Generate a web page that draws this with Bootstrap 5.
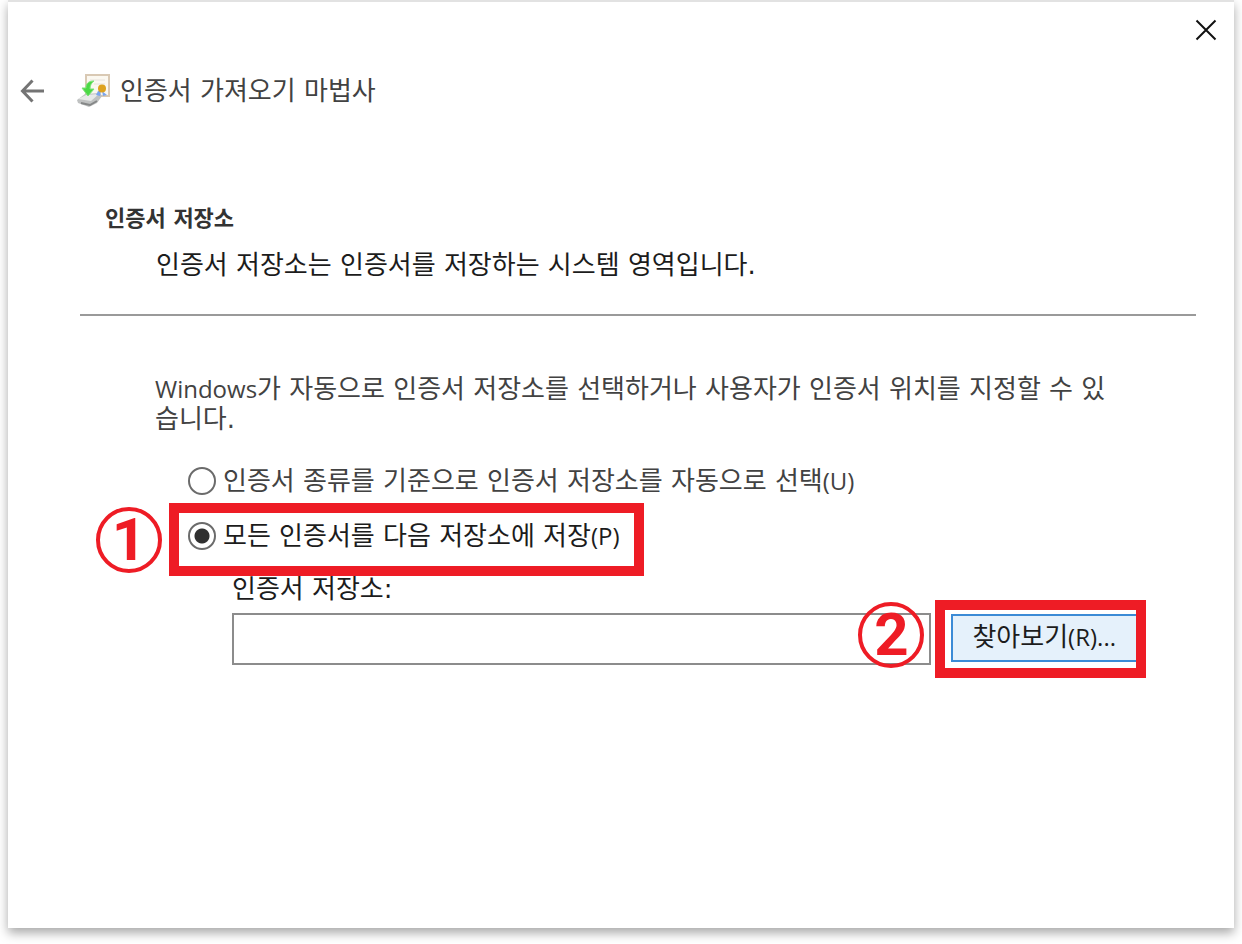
<!DOCTYPE html>
<html lang="ko">
<head>
<meta charset="utf-8">
<meta name="viewport" content="width=device-width, initial-scale=1">
<title>인증서 가져오기 마법사</title>
<link href="https://cdn.jsdelivr.net/npm/bootstrap@5.3.0/dist/css/bootstrap.min.css" rel="stylesheet">
<style>
  body { font-family: "DejaVu Sans", "Noto Sans CJK KR", sans-serif; font-size: 26px; line-height: 30px; color: #1c1c1c; background: #fff; }
  .page-frame { padding: 0 8px 16px; }
  .wizard { border-top: 2px solid #e2e2e2; background: #fff; box-shadow: 0 5px 10px rgba(0, 0, 0, .34); }
  .latin { font-family: "Open Sans", sans-serif; font-size: 24px; }
  .soft { color: #424242; }
  .title-bar { padding: 16px 16px 0; }
  .title-row { padding: 32px 12px 0; }
  .title-row h1 { font-size: 26px; line-height: 32px; margin-left: 10px; }
  .back-btn { margin-right: 32px; }
  .intro { padding: 96px 0 0 97px; }
  .intro h2 { font-size: 22px; line-height: 30px; color: #333; }
  .intro p { padding: 16px 0 0 51px; }
  .divider { margin: 34px 38px 0 72px; border-top: 2px solid #9a9a9a; opacity: 1; }
  .choices { padding: 58px 88px 0 147px; }
  .lead-text { padding-right: 24px; }
  .option { gap: 7px; }
  .option-auto { padding: 32px 0 0 33px; }
  .radio-dot { appearance: none; flex: none; width: 28px; height: 28px; margin: 0; border: 2px solid #6b6b6b; border-radius: 50%; background: #fff; }
  .radio-dot:checked { background: radial-gradient(circle, #303030 7px, #fff 8px); }
  .callout { border: 10px solid #ee1c25; }
  .callout-option { margin: 7px 0 0 14px; padding: 8px 14px 15px 9px; }
  .store { margin-top: -2px; padding-left: 77px; }
  .store-row { margin-top: -4px; gap: 4px; }
  .store-input { min-width: 0; height: 52px; border: 2px solid #8c8c8c; background: #fff; padding: 0 12px; }
  .callout-browse { padding: 4px 0 6px 6px; }
  .browse-btn { height: 48px; padding: 0 20px 2px 19px; border: 2px solid #3b8bd6; border-right: 0; background: #e5f1fb; color: #1c1c1c; white-space: nowrap; }
  .marker { width: 66px; height: 66px; border: 4px solid #ee1c25; border-radius: 50%; color: #ee1c25; font: bold 60px/60px Roboto, sans-serif; }
  .marker-one { left: -83px; top: -6px; }
  .marker-two { left: -87px; top: -8px; }
</style>
<script src="https://cdn.jsdelivr.net/npm/bootstrap@5.3.0/dist/js/bootstrap.bundle.min.js"></script>
</head>
<body>
<div class="page-frame d-flex flex-column min-vh-100">
  <main class="wizard flex-grow-1">
    <div class="title-bar d-flex justify-content-end">
      <button type="button" class="btn p-0 border-0 rounded-0 d-flex" aria-label="닫기">
        <svg width="24" height="24" viewBox="0 0 24 24" fill="none" stroke="#111" stroke-width="2"><path d="M2.500 2.500 21.500 21.500M21.500 2.500 2.500 21.500"/></svg>
      </button>
    </div>
    <header class="title-row d-flex align-items-center">
      <button type="button" class="back-btn btn p-0 border-0 rounded-0 d-flex" aria-label="뒤로">
        <svg width="25" height="24" viewBox="0 0 25 24" fill="none" stroke="#747474" stroke-width="3"><path d="M24 12H3M12.500 1.500 2.500 12l10 10.500"/></svg>
      </button>
      <svg width="33" height="34" viewBox="0 0 33 34" aria-hidden="true">
        <path d="M9 1h23v21H9z" fill="#fbf8f0" stroke="#d9c9b4" stroke-width="2"/>
        <path d="M13 6h15M17 10h11" stroke="#e6e2dc" stroke-width="1"/>
        <path d="M0 26 8 20l15-1 2 3-5 7-8 4L1 29z" fill="#bfc1c1"/>
        <path d="M1 25 9 21l13-1-8 7z" fill="#e7e9e8"/>
        <path d="M4 29l9 2 7-4" fill="none" stroke="#858787" stroke-width="2"/>
        <path d="M21 17h3l-1 5-4-1zM25 17l5 4-4 1z" fill="#7ba5ee"/>
        <circle cx="25" cy="14.500" r="4" fill="#dda21e"/>
        <path d="M17 7c-6 0-8 3-8 7H5l6 8 6-7h-4c0-3 1-6 4-8z" fill="#4bd945" stroke="#7fe27a"/>
      </svg>
      <h1 class="soft fw-normal mb-0">인증서 가져오기 마법사</h1>
    </header>
    <section class="intro">
      <h2 class="fw-bold mb-0">인증서 저장소</h2>
      <p class="mb-0">인증서 저장소는 인증서를 저장하는 시스템 영역입니다.</p>
    </section>
    <hr class="divider">
    <form class="choices">
      <p class="lead-text soft mb-0"><span class="latin">Windows</span>가 자동으로 인증서 저장소를 선택하거나 사용자가 인증서 위치를 지정할 수 있습니다.</p>
      <div class="option option-auto soft d-flex align-items-center">
        <input class="radio-dot" type="radio" name="store" id="auto">
        <label for="auto">인증서 종류를 기준으로 인증서 저장소를 자동으로 선택<span class="latin">(U)</span></label>
      </div>
      <div class="d-flex">
        <div class="callout callout-option option d-flex align-items-center position-relative">
          <span class="marker marker-one position-absolute d-flex align-items-center justify-content-center">1</span>
          <input class="radio-dot" type="radio" name="store" id="manual" checked>
          <label for="manual">모든 인증서를 다음 저장소에 저장<span class="latin">(P)</span></label>
        </div>
      </div>
      <div class="store">
        <label for="path">인증서 저장소:</label>
        <div class="store-row d-flex align-items-center">
          <input class="store-input flex-grow-1 rounded-0" type="text" id="path">
          <div class="callout callout-browse position-relative">
            <span class="marker marker-two position-absolute d-flex align-items-center justify-content-center">2</span>
            <button type="button" class="browse-btn d-block">찾아보기<span class="latin">(R)...</span></button>
          </div>
        </div>
      </div>
    </form>
  </main>
</div>
</body>
</html>
